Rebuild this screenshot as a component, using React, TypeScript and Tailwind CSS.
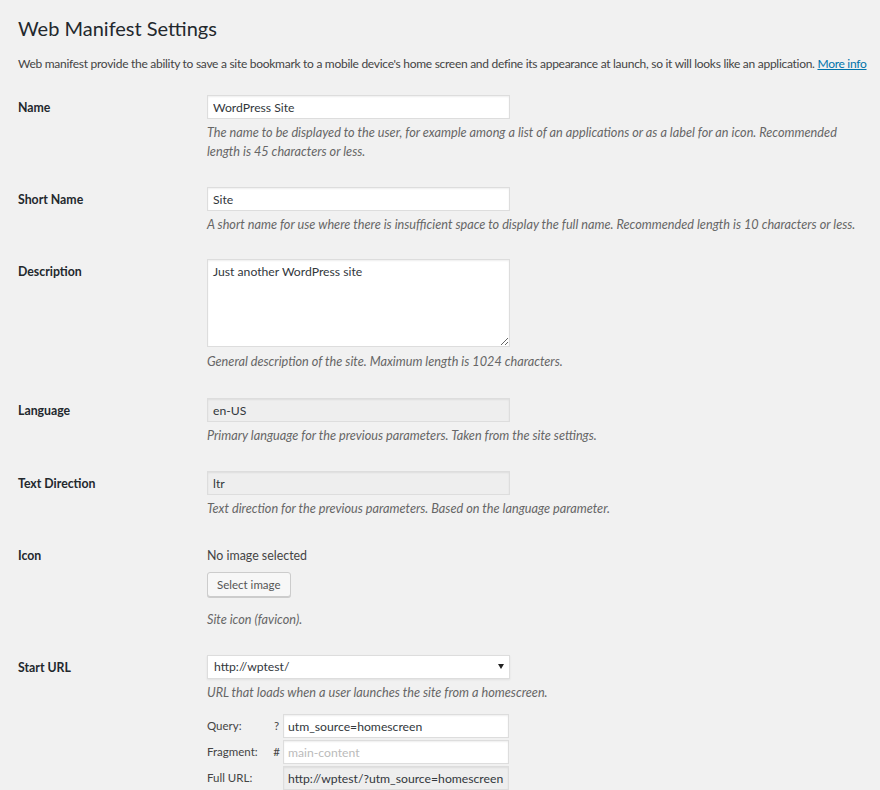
import React from "react";

const font = { fontFamily: 'Lato, "Open Sans", sans-serif' };

function Label({ children }: { children: React.ReactNode }) {
  return (
    <div className="w-[189px] shrink-0 pt-[3px] text-[12.3px] leading-[19px] font-bold text-[#23282d]">
      {children}
    </div>
  );
}

function Help({ children, className = "" }: { children: React.ReactNode; className?: string }) {
  return <p className={"text-[12.7px] leading-[19px] italic text-[#666] " + className}>{children}</p>;
}

const inputCls =
  "block h-[24px] w-[303px] border border-[#dddddd] bg-white px-[5px] text-[12.2px] text-[#32373c] shadow-[inset_0_1px_2px_rgba(0,0,0,0.07)] outline-none";
const roCls =
  "block h-[24px] w-[303px] border border-[#dddddd] bg-[#eeeeee] px-[5px] text-[12.2px] text-[#32373c] shadow-[inset_0_1px_2px_rgba(0,0,0,0.07)] outline-none";

export default function App() {
  return (
    <div className="min-h-[790px] bg-[#f1f1f1] pl-[18px] pr-[12px] text-[#444]" style={font}>
      <h1 className="pt-[13px] text-[20px] leading-[30px] font-normal text-[#23282d]">Web Manifest Settings</h1>
      <p className="mt-[11px] whitespace-nowrap text-[12px] tracking-[-0.28px] leading-[19px] text-[#444]">
        Web manifest provide the ability to save a site bookmark to a mobile device's home screen and define its appearance at launch, so it will looks like an application.{" "}
        <a className="text-[#0073aa] underline" href="#">More info</a>
      </p>

      <div className="mt-[22px] flex flex-col">
        {/* Name */}
        <div className="flex">
          <Label>Name</Label>
          <div className="flex-1">
            <input className={inputCls} defaultValue="WordPress Site" />
            <Help className="mt-[4px]">
              The name to be displayed to the user, for example among a list of an applications or as a label for an icon. Recommended length is 45 characters or less.
            </Help>
          </div>
        </div>

        {/* Short Name */}
        <div className="mt-[26px] flex">
          <Label>Short Name</Label>
          <div className="flex-1">
            <input className={inputCls} defaultValue="Site" />
            <Help className="mt-[4px]">
              A short name for use where there is insufficient space to display the full name. Recommended length is 10 characters or less.
            </Help>
          </div>
        </div>

        {/* Description */}
        <div className="mt-[25px] flex">
          <Label>Description</Label>
          <div className="flex-1">
            <textarea
              className="block h-[88px] w-[303px] border border-[#dddddd] bg-white px-[5px] py-[2px] text-[12.2px] leading-[19px] text-[#32373c] shadow-[inset_0_1px_2px_rgba(0,0,0,0.07)] outline-none"
              defaultValue="Just another WordPress site"
            />
            <Help className="mt-[5px]">General description of the site. Maximum length is 1024 characters.</Help>
          </div>
        </div>

        {/* Language */}
        <div className="mt-[27px] flex">
          <Label>Language</Label>
          <div className="flex-1">
            <input className={roCls} defaultValue="en-US" readOnly />
            <Help className="mt-[4px]">Primary language for the previous parameters. Taken from the site settings.</Help>
          </div>
        </div>

        {/* Text Direction */}
        <div className="mt-[26px] flex">
          <Label>Text Direction</Label>
          <div className="flex-1">
            <input className={roCls} defaultValue="ltr" readOnly />
            <Help className="mt-[4px]">Text direction for the previous parameters. Based on the language parameter.</Help>
          </div>
        </div>

        {/* Icon */}
        <div className="mt-[25px] flex">
          <Label>Icon</Label>
          <div className="flex-1 pt-[3px]">
            <div className="text-[12.4px] leading-[19px] text-[#444]">No image selected</div>
            <button className="mt-[7px] block h-[25px] rounded-[3px] border border-[#cccccc] bg-[#f7f7f7] px-[9px] text-[11.5px] leading-[23px] text-[#555] shadow-[0_1px_0_#cccccc]">
              Select image
            </button>
            <Help className="mt-[13px]">Site icon (favicon).</Help>
          </div>
        </div>

        {/* Start URL */}
        <div className="mt-[26px] flex">
          <Label>Start URL</Label>
          <div className="flex-1">
            <div className="relative flex h-[24px] w-[303px] items-center border border-[#dddddd] bg-white pl-[6px] text-[12.2px] text-[#32373c] shadow-[0_1px_2px_rgba(0,0,0,0.07)]">
              http://wptest/
              <svg className="absolute right-[5px] top-[8px]" width="6" height="5" viewBox="0 0 6 5">
                <path d="M0 0 H6 L3 5 Z" fill="#222" />
              </svg>
            </div>
            <Help className="mt-[4px]">URL that loads when a user launches the site from a homescreen.</Help>
            <div className="mt-[12px] flex flex-col gap-[2px] text-[11.5px] text-[#444]">
              <div className="flex items-center">
                <span className="w-[63px]">Query:</span>
                <span className="w-[13px] text-center">?</span>
                <input className="h-[24px] w-[226px] border border-[#dddddd] bg-white px-[4px] text-[12.2px] text-[#32373c] shadow-[inset_0_1px_2px_rgba(0,0,0,0.07)] outline-none" defaultValue="utm_source=homescreen" />
              </div>
              <div className="flex items-center">
                <span className="w-[63px]">Fragment:</span>
                <span className="w-[13px] text-center">#</span>
                <input className="h-[24px] w-[226px] border border-[#dddddd] bg-white px-[4px] text-[12.2px] text-[#32373c] placeholder:text-[#bbbbbb] shadow-[inset_0_1px_2px_rgba(0,0,0,0.07)] outline-none" placeholder="main-content" />
              </div>
              <div className="flex items-center">
                <span className="w-[76px]">Full URL:</span>
                <input className="h-[24px] w-[226px] border border-[#dddddd] bg-[#eeeeee] px-[4px] text-[12.2px] text-[#32373c] shadow-[inset_0_1px_2px_rgba(0,0,0,0.07)] outline-none" defaultValue="http://wptest/?utm_source=homescreen" readOnly />
              </div>
            </div>
          </div>
        </div>
      </div>
    </div>
  );
}
